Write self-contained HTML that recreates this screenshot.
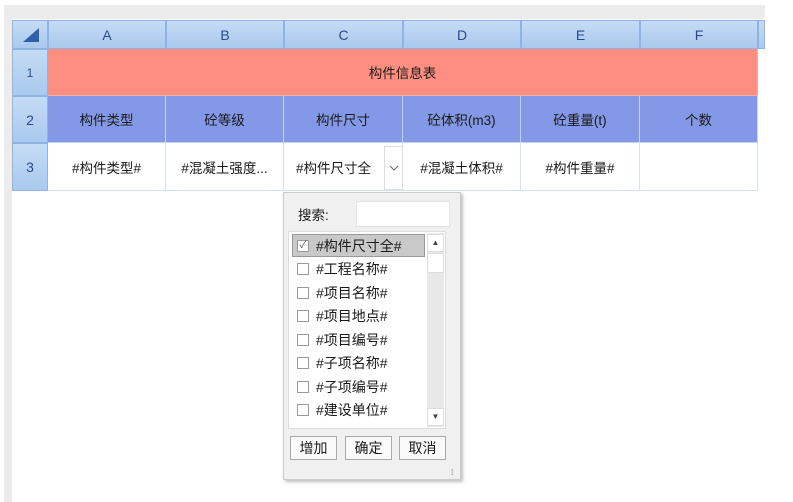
<!DOCTYPE html>
<html><head><meta charset="utf-8"><style>
*{box-sizing:border-box;margin:0;padding:0}
body{width:793px;height:502px;background:#fff;position:relative;overflow:hidden;font-family:"Liberation Sans","Noto Sans CJK SC",sans-serif;font-size:13.5px;color:#1a1a1a}
.a{position:absolute}
.hd{background:linear-gradient(#c5dcf5,#a9c9ee);border:1px solid #8fb3e3;color:#2a4a8a;display:flex;align-items:center;justify-content:center;font-size:14px}
.c{display:flex;align-items:center;justify-content:center;border-right:1px solid #d6e2f3;border-bottom:1px solid #d6e2f3}
.it{position:absolute;left:297px;height:22px;display:flex;align-items:center;font-size:14px}
.cb{width:12px;height:12px;border:1px solid #999;background:#fff;margin-right:7px;font-size:10px;line-height:10px;text-align:center;color:#555}
.bt{position:absolute;top:436px;height:24px;width:47px;border:1px solid #aaa;background:#fafafa;display:flex;align-items:center;justify-content:center;font-size:14px}
</style></head><body>
<div class="a" style="left:4px;top:5px;width:761px;height:14px;background:#ececec"></div>
<div class="a" style="left:4px;top:5px;width:8px;height:497px;background:#ececec"></div>
<div class="a hd" style="left:12px;top:20px;width:36px;height:29px"><svg width="20" height="16"><polygon points="19,1 19,15 3,15" fill="#2f5fa8"/></svg></div>
<div class="a hd" style="left:48px;top:20px;width:118px;height:29px">A</div>
<div class="a hd" style="left:166px;top:20px;width:118px;height:29px">B</div>
<div class="a hd" style="left:284px;top:20px;width:119px;height:29px">C</div>
<div class="a hd" style="left:403px;top:20px;width:118px;height:29px">D</div>
<div class="a hd" style="left:521px;top:20px;width:119px;height:29px">E</div>
<div class="a hd" style="left:640px;top:20px;width:118px;height:29px">F</div>
<div class="a hd" style="left:758px;top:20px;width:7px;height:29px"></div>
<div class="a hd" style="left:12px;top:49px;width:36px;height:47px;font-size:12px">1</div>
<div class="a hd" style="left:12px;top:96px;width:36px;height:47px">2</div>
<div class="a hd" style="left:12px;top:143px;width:36px;height:48px">3</div>
<div class="a c" style="left:48px;top:49px;width:710px;height:47px;background:#fe8f80;border-color:#f3b0a6">构件信息表</div>
<div class="a c" style="left:48px;top:96px;width:118px;height:47px;background:#8398e6;border-color:#c7d3f3">构件类型</div>
<div class="a c" style="left:166px;top:96px;width:118px;height:47px;background:#8398e6;border-color:#c7d3f3">砼等级</div>
<div class="a c" style="left:284px;top:96px;width:119px;height:47px;background:#8398e6;border-color:#c7d3f3">构件尺寸</div>
<div class="a c" style="left:403px;top:96px;width:118px;height:47px;background:#8398e6;border-color:#c7d3f3">砼体积(m3)</div>
<div class="a c" style="left:521px;top:96px;width:119px;height:47px;background:#8398e6;border-color:#c7d3f3">砼重量(t)</div>
<div class="a c" style="left:640px;top:96px;width:118px;height:47px;background:#8398e6;border-color:#c7d3f3">个数</div>
<div class="a c" style="left:48px;top:143px;width:118px;height:48px">#构件类型#</div>
<div class="a c" style="left:166px;top:143px;width:118px;height:48px">#混凝土强度...</div>
<div class="a c" style="left:284px;top:143px;width:119px;height:48px;justify-content:flex-start;padding-left:12px">#构件尺寸全</div>
<div class="a" style="left:384px;top:146px;width:19px;height:44px;border:1px solid #ddd;background:#fff;display:flex;align-items:center;justify-content:center"><svg width="10" height="6"><path d="M1 1L5 5L9 1" stroke="#666" fill="none"/></svg></div>
<div class="a c" style="left:403px;top:143px;width:118px;height:48px">#混凝土体积#</div>
<div class="a c" style="left:521px;top:143px;width:119px;height:48px">#构件重量#</div>
<div class="a c" style="left:640px;top:143px;width:118px;height:48px"></div>
<div class="a" style="left:283px;top:192px;width:178px;height:288px;background:#f0f0f0;border:1px solid #ccc;box-shadow:2px 2px 3px rgba(0,0,0,.25)"></div>
<div class="a" style="left:298px;top:204px;font-size:13.5px">搜索:</div>
<div class="a" style="left:356px;top:201px;width:94px;height:26px;background:#fff;border:1px solid #e4e4e4"></div>
<div class="a" style="left:288px;top:231px;width:158px;height:198px;background:#fff;border:1px solid #ddd"></div>
<div class="a" style="left:427px;top:233px;width:17px;height:194px;background:#e8e8e8"></div>
<div class="a" style="left:427px;top:234px;width:17px;height:18px;background:#fff;border:1px solid #ddd;font-size:8px;text-align:center;line-height:16px;color:#444">▲</div>
<div class="a" style="left:427px;top:253px;width:17px;height:20px;background:#fff;border:1px solid #ddd"></div>
<div class="a" style="left:427px;top:408px;width:17px;height:18px;background:#fff;border:1px solid #ddd;font-size:8px;text-align:center;line-height:16px;color:#444">▼</div>
<div class="a" style="left:292px;top:234px;width:133px;height:23px;background:#c9c9c9;border:1px solid #999"></div>
<div class="it" style="top:235px"><span class="cb">✓</span>#构件尺寸全#</div>
<div class="it" style="top:258px"><span class="cb"></span>#工程名称#</div>
<div class="it" style="top:282px"><span class="cb"></span>#项目名称#</div>
<div class="it" style="top:305px"><span class="cb"></span>#项目地点#</div>
<div class="it" style="top:329px"><span class="cb"></span>#项目编号#</div>
<div class="it" style="top:352px"><span class="cb"></span>#子项名称#</div>
<div class="it" style="top:376px"><span class="cb"></span>#子项编号#</div>
<div class="it" style="top:399px"><span class="cb"></span>#建设单位#</div>
<div class="bt" style="left:290px">增加</div>
<div class="bt" style="left:345px">确定</div>
<div class="bt" style="left:399px">取消</div>
<div class="a" style="left:451px;top:468px;font-size:8px;color:#555">⁞</div>
</body></html>
